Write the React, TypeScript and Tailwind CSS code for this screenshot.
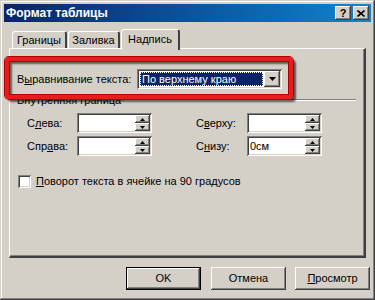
import React from "react";

const raised =
  "shadow-[inset_-1px_-1px_#404040,inset_1px_1px_#ffffff,inset_-2px_-2px_#808080,inset_2px_2px_#d4d0c8]";
const sunken =
  "shadow-[inset_1px_1px_#808080,inset_-1px_-1px_#ffffff,inset_2px_2px_#404040,inset_-2px_-2px_#d4d0c8]";

function SpinBox({ value }: { value?: string }) {
  return (
    <div className={`w-[75px] h-[20px] bg-white flex items-center justify-between p-[2px] ${sunken}`}>
      <span className="pl-[1px] leading-none">{value}</span>
      <div className="flex flex-col w-[15px] h-[16px]">
        {/* up */}
        <div className={`h-[8px] bg-[#d4d0c8] flex items-center justify-center ${raised}`}>
          <svg width="5" height="3" viewBox="0 0 5 3">
            <path d="M2.5 0L5 3H0z" fill="#000" />
          </svg>
        </div>
        {/* down */}
        <div className={`h-[8px] bg-[#d4d0c8] flex items-center justify-center ${raised}`}>
          <svg width="5" height="3" viewBox="0 0 5 3">
            <path d="M0 0H5L2.5 3z" fill="#000" />
          </svg>
        </div>
      </div>
    </div>
  );
}

function Tab({ label, active, w }: { label: string; active?: boolean; w: string }) {
  return (
    <div
      className={`${w} relative flex items-center justify-center rounded-t-[3px] border-t border-l border-white border-r-[2px] border-r-[#404040] bg-[#d4d0c8] ${
        active ? "h-[21px] z-10 -mb-[2px] pb-[2px]" : "h-[17px]"
      }`}
    >
      {label}
    </div>
  );
}

export default function App() {
  return (
    <div
      className="relative w-[375px] h-[300px] bg-[#d4d0c8] p-[4px] flex flex-col text-[11px] text-black shadow-[inset_-1px_-1px_#404040,inset_1px_1px_#d4d0c8,inset_-2px_-2px_#808080,inset_2px_2px_#ffffff]"
      style={{ fontFamily: '"Liberation Sans", Arial, sans-serif' }}
    >
      {/* Title bar */}
      <div className="h-[18px] flex items-center justify-between pl-[2px] pr-[2px] bg-linear-to-r from-[#0a246a] to-[#1084d0]">
        <span className="text-white font-bold text-[12px] leading-none">Формат таблицы</span>
        <div className="flex gap-[2px]">
          <div className={`w-[16px] h-[14px] bg-[#d4d0c8] flex items-center justify-center font-bold text-[11px] leading-none ${raised}`}>
            ?
          </div>
          <div className={`w-[16px] h-[14px] bg-[#d4d0c8] flex items-center justify-center ${raised}`}>
            <svg width="8" height="7" viewBox="0 0 8 7">
              <path d="M0.5 0.5L7.5 6.5M7.5 0.5L0.5 6.5" stroke="#000" strokeWidth="1.6" />
            </svg>
          </div>
        </div>
      </div>

      {/* Tabs + panel */}
      <div className="mt-[7px] ml-[5px] flex flex-col">
        <div className="h-[19px] flex items-end pl-[3px] gap-[1px]">
          <Tab label="Границы" w="w-[55px]" />
          <Tab label="Заливка" w="w-[52px]" />
          <Tab label="Надпись" w="w-[59px]" active />
        </div>
        <div className="w-[357px] h-[210px] border-t border-l border-white border-r-[2px] border-b-[2px] border-r-[#404040] border-b-[#404040] flex flex-col shadow-[inset_-1px_-1px_#808080]">
          {/* Alignment row */}
          <div className="flex items-center pt-[20px] pl-[7px]">
            <span className="w-[120px]">
              В<u className="underline-offset-[1px]">ы</u>равнивание текста:
            </span>
            <div className={`w-[145px] h-[20px] bg-white flex items-center p-[2px] ${sunken}`}>
              <div className="flex-1 h-[16px] p-[1px]">
                <div className="h-full bg-[#0a246a] text-white outline-1 outline-dotted outline-white -outline-offset-1 flex items-center pl-[2px] leading-none">
                  По верхнему краю
                </div>
              </div>
              <div className={`w-[16px] h-[16px] bg-[#d4d0c8] flex items-center justify-center ${raised}`}>
                <svg width="7" height="4" viewBox="0 0 7 4">
                  <path d="M0 0H7L3.5 4z" fill="#000" />
                </svg>
              </div>
            </div>
          </div>

          {/* Group header */}
          <div className="flex items-center mt-[5px] pl-[7px] pr-[8px] h-[12px]">
            <span>Внутренняя граница</span>
            <div className="flex-1 ml-[4px] border-t border-t-[#808080] border-b border-b-white" />
          </div>

          {/* Row 1 */}
          <div className="flex items-center mt-[7px] pl-[17px]">
            <span className="w-[50px]">
              С<u>л</u>ева:
            </span>
            <SpinBox />
            <span className="w-[51px] ml-[44px]">
              С<u>в</u>ерху:
            </span>
            <SpinBox />
          </div>

          {/* Row 2 */}
          <div className="flex items-center mt-[3px] pl-[17px]">
            <span className="w-[50px]">
              Спр<u>а</u>ва:
            </span>
            <SpinBox />
            <span className="w-[51px] ml-[44px]">
              С<u>н</u>изу:
            </span>
            <SpinBox value="0см" />
          </div>

          {/* Checkbox */}
          <div className="flex items-center mt-[17px] pl-[8px]">
            <div className={`w-[13px] h-[13px] bg-white ${sunken}`} />
            <span className="ml-[5px]">
              <u>П</u>оворот текста в ячейке на 90 градусов
            </span>
          </div>
        </div>
      </div>

      {/* Buttons */}
      <div className="flex justify-end mt-[9px] pr-[1px]">
        <div className="w-[75px] h-[23px] border border-black">
          <div className={`w-full h-full bg-[#d4d0c8] flex items-center justify-center ${raised}`}>OK</div>
        </div>
        <div className={`w-[75px] h-[23px] ml-[10px] bg-[#d4d0c8] flex items-center justify-center ${raised}`}>
          Отмена
        </div>
        <div className={`w-[75px] h-[23px] ml-[9px] bg-[#d4d0c8] flex items-center justify-center ${raised}`}>
          <span>
            <u>П</u>росмотр
          </span>
        </div>
      </div>

      {/* Red annotation frame */}
      <div className="absolute left-[5px] top-[57px] w-[288px] h-[42px] rounded-[4px] border-[4px] border-[#e81c1c] shadow-[0_0_0_1px_#b00000,inset_0_0_0_1px_#b00000,3px_3px_2px_rgba(0,0,0,0.6),inset_3px_3px_2px_rgba(0,0,0,0.55)]" />
    </div>
  );
}
